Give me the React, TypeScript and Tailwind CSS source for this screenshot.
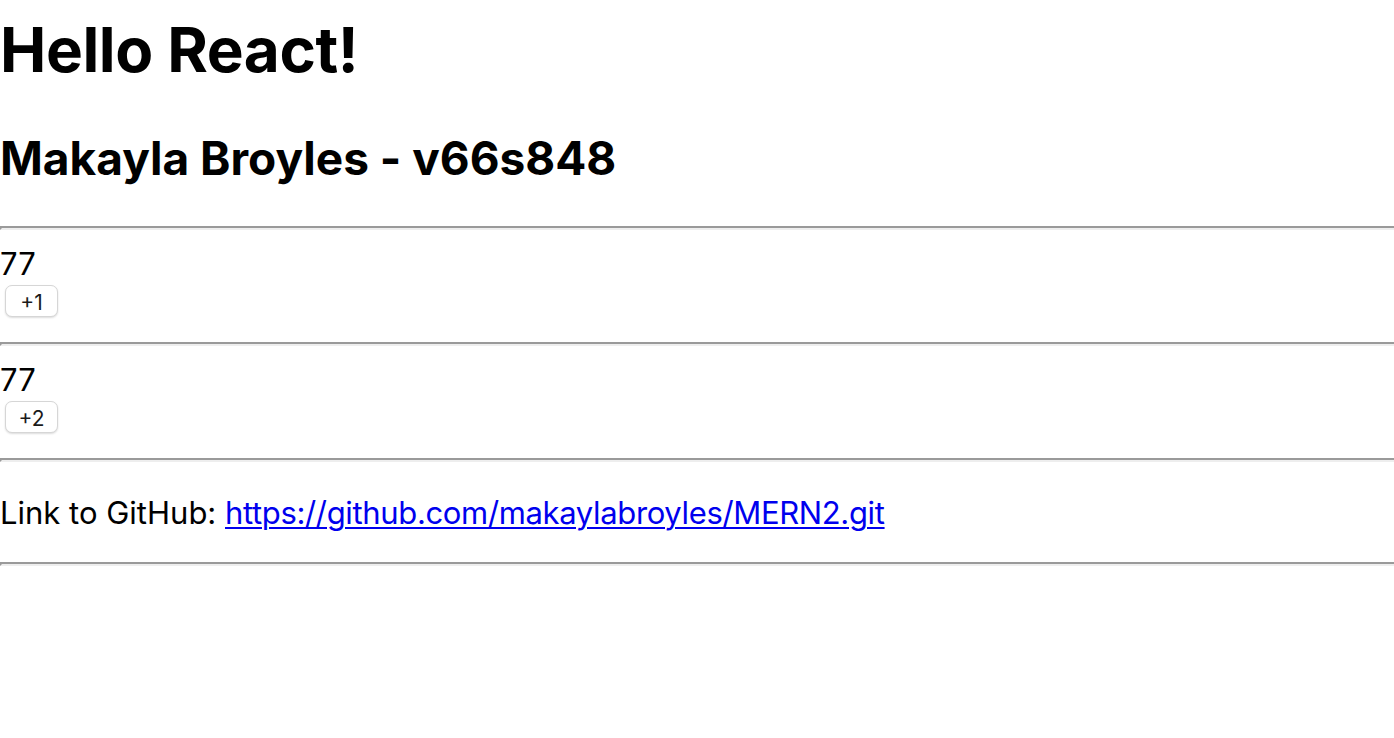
import React from "react";

function Hr() {
  return <div className="h-[4px] w-full border-t-2 border-l-2 border-t-[#9a9a9a] border-l-[#9a9a9a] border-b-2 border-b-[#eeeeee]" />;
}

function Counter({ label }: { label: string }) {
  return (
    <div className="pt-[16px] pb-[25px]">
      <div className="text-[31px] leading-[36px] h-[36px]">77</div>
      <button className="mt-[3px] ml-[5px] h-[32px] w-[53px] rounded-[7px] border border-[#d6d6d6] bg-white pt-[4px] text-[21px] leading-[26px] text-[#1a1a1a] shadow-[0_1px_2px_rgba(0,0,0,0.14)]">
        {label}
      </button>
    </div>
  );
}

export default function App() {
  return (
    <div className="bg-white text-black min-h-[738px]" style={{ fontFamily: "Inter, 'Noto Sans', sans-serif" }}>
      <h1 className="pt-[12px] text-[62px] leading-[76px] h-[88px] font-bold tracking-[-0.4px]">Hello React!</h1>
      <h2 className="pt-[43px] text-[46px] leading-[54px] h-[97px] font-bold">Makayla Broyles - v66s848</h2>
      <div className="h-[41px]" />
      <Hr />
      <Counter label="+1" />
      <Hr />
      <Counter label="+2" />
      <Hr />
      <div className="pt-[33px] pb-[31px] text-[31px] leading-[36px]">
        Link to GitHub:{" "}
        <a href="#" className="text-[#0000ee] underline decoration-[2px] underline-offset-[3px] tracking-[-0.35px]">
          https://github.com/makaylabroyles/MERN2.git
        </a>
      </div>
      <Hr />
    </div>
  );
}
